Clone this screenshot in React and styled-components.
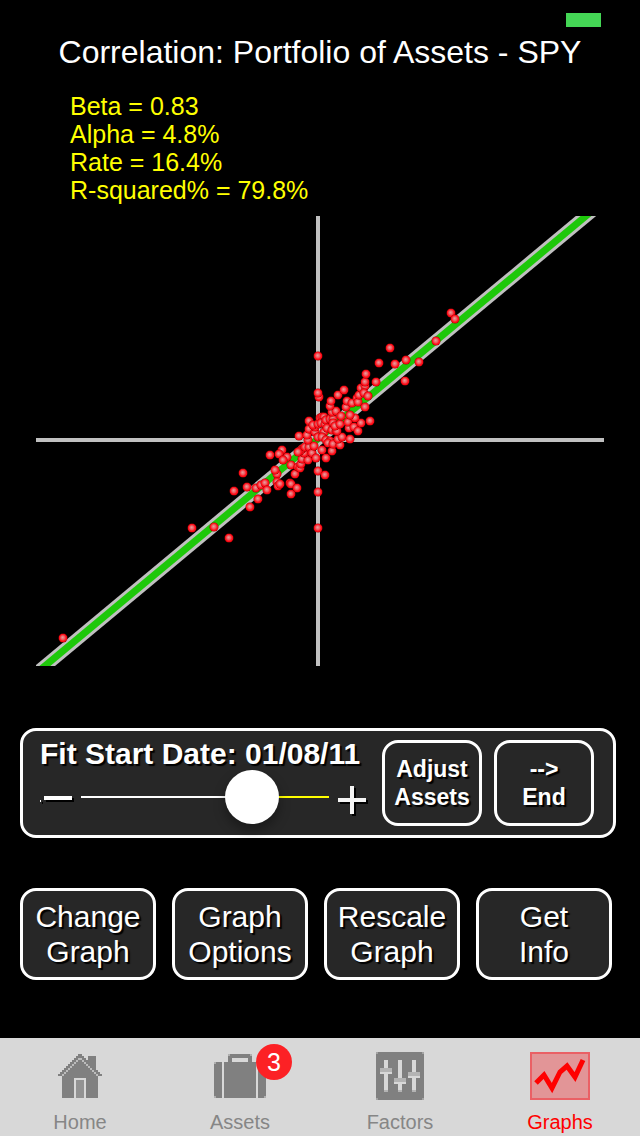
import React, { useState } from "react";
import styled, { createGlobalStyle } from "styled-components";

const GlobalStyle = createGlobalStyle`
  body {
    margin: 0;
    background: #000;
    font-family: "Liberation Sans", Arial, Helvetica, sans-serif;
  }

  * {
    box-sizing: border-box;
  }
`;

const Screen = styled.div`
  display: flex;
  flex-direction: column;
  min-height: 100vh;
  color: #fff;
`;

const StatusBar = styled.div`
  display: flex;
  justify-content: flex-end;
  height: 32px;
  padding: 13px 39px 0 0;
`;

const Battery = styled.div`
  width: 35px;
  height: 14px;
  background: #44d655;
`;

const Title = styled.h1`
  margin: 0;
  font-size: 32px;
  font-weight: normal;
  line-height: 40px;
  text-align: center;
`;

const Stats = styled.ul`
  list-style: none;
  margin: 20px 0 12px;
  padding: 0 70px;
  color: #ff0;
  font-size: 25px;
  line-height: 28px;
`;

const Chart = styled.svg`
  display: block;
  margin: 0 36px;
`;

const Panel = styled.section`
  display: flex;
  gap: 12px;
  margin: 62px 24px 50px 20px;
  padding: 9px 19px 9px 17px;
  background: #272727;
  border: 3px solid #fff;
  border-radius: 16px;
`;

const DateField = styled.div`
  flex: 1;
  min-width: 0;
`;

const DateLabel = styled.label`
  display: block;
  font-size: 30px;
  font-weight: bold;
  line-height: 28px;
  white-space: nowrap;
  text-shadow: 2px 2px 1px #000;
`;

const SliderRow = styled.div`
  display: flex;
  height: 58px;
`;

const StepButton = styled.button`
  width: 41px;
  padding: 0;
  background: none;
  border: 0;

  svg {
    display: block;
    overflow: visible;
    filter: drop-shadow(2px 2px 0 #000);
  }
`;

const Slider = styled.input`
  appearance: none;
  flex: 1;
  min-width: 0;
  height: 58px;
  margin: 0;
  background: none;

  &::-webkit-slider-runnable-track {
    height: 2px;
    background: linear-gradient(
      to right,
      #fff ${(props) => props.value}%,
      #ff0 ${(props) => props.value}%
    );
  }

  &::-webkit-slider-thumb {
    appearance: none;
    width: 54px;
    height: 54px;
    margin-top: -26px;
    background: #fff;
    border-radius: 50%;
    box-shadow: 0 6px 12px rgba(0, 0, 0, 0.35);
  }
`;

const Button = styled.button`
  padding: 0;
  color: #fff;
  background: #272727;
  border: 3px solid #fff;
  border-radius: 16px;
  font-family: inherit;
  font-size: 30px;
  line-height: 35px;
  text-shadow: 2px 2px 1px #000;
`;

const SmallButton = styled(Button)`
  width: 100px;
  font-size: 23px;
  font-weight: bold;
  line-height: 28px;
`;

const Actions = styled.div`
  display: grid;
  grid-template-columns: repeat(4, 1fr);
  gap: 16px;
  margin: 0 28px 58px 20px;

  ${Button} {
    height: 92px;
  }
`;

const TabBar = styled.nav`
  display: grid;
  grid-template-columns: repeat(4, 1fr);
  height: 98px;
  margin-top: auto;
  background: #d8d8d8;
`;

const Tab = styled.a`
  display: flex;
  flex-direction: column;
  align-items: center;
  padding-top: 14px;
  color: ${(props) => (props.$active ? "#f00" : "#868686")};
  font-size: 20px;
  line-height: 24px;
  text-decoration: none;
`;

const TabIcon = styled.span`
  position: relative;
  display: flex;
  align-items: center;
  justify-content: center;
  width: 60px;
  height: 48px;
  margin-bottom: 10px;
`;

const Badge = styled.span`
  position: absolute;
  top: -8px;
  right: -22px;
  width: 36px;
  color: #fff;
  background: #fc2125;
  border-radius: 50%;
  font-size: 25px;
  line-height: 36px;
  text-align: center;
`;

// monthly returns relative to the axes, y grows downwards
const returns = [
  [-255, 198], [-126, 88], [-104, 87], [-89, 98], [-84, 51], [-75, 33],
  [-71, 47], [-68, 67], [-60, 59], [-62, 48], [-57, 45], [-53, 43],
  [-51, 50], [-48, 15], [-36, 10], [-39, 14], [-31, 17], [-35, 20],
  [-41, 34], [-43, 30], [-41, 42], [-40, 46], [-38, 44], [-28, 43],
  [-27, 44], [-21, 48], [-27, 54], [-23, 34], [-27, 25], [-20, 27],
  [-18, 28], [-17, 24], [-16, 19], [-10, 20], [-14, 13], [-16, 9],
  [-18, 11], [-20, 12], [-13, 7], [-19, -4], [-9, 7], [-6, 13],
  [-2, 18], [4, 10], [8, 18], [0, 31], [7, 35], [0, 52], [0, 88],
  [-10, 0], [-11, -5], [-9, -11], [-3, -8], [0, -3], [-4, 6],
  [-9, -19], [-3, -13], [-5, -15], [0, -16], [2, -22], [4, -23],
  [6, -23], [3, -17], [7, -16], [8, -20], [6, -8], [9, -12], [4, -3],
  [8, 0], [12, 1], [10, 3], [14, 11], [15, 4], [22, 5], [20, -1],
  [24, -3], [32, -1], [14, -10], [18, -9], [19, -9], [12, -21],
  [15, -21], [15, -17], [17, -14], [22, -16], [14, -28], [18, -29],
  [12, -34], [13, -39], [23, -24], [31, -12], [30, -18], [36, -13],
  [40, -9], [43, -17], [52, -19], [37, -22], [32, -25], [28, -33],
  [29, -39], [34, -37], [39, -42], [40, -38], [47, -33], [41, -45],
  [43, -52], [47, -54], [46, -47], [50, -44], [47, -58], [48, -66],
  [58, -58], [20, -45], [26, -50], [1, -43], [0, -47], [0, -84],
  [61, -77], [72, -92], [77, -76], [88, -80], [101, -78], [87, -59],
  [118, -99], [133, -127], [137, -121],
];

const ScatterChart = () => (
  <Chart viewBox="-282 -224 568 450" role="img" aria-label="Correlation scatter plot">
    <defs>
      <radialGradient id="dot" fx="0.45" fy="0.42">
        <stop offset="0" stopColor="#e8a0a0" />
        <stop offset="0.45" stopColor="#f05a60" />
        <stop offset="0.7" stopColor="#ff1822" />
        <stop offset="0.88" stopColor="#f40410" />
        <stop offset="1" stopColor="#900" />
      </radialGradient>
    </defs>
    <path d="M0-224V226M-282 0H286" stroke="#c0c0c0" strokeWidth="4" />
    <path d="M-290 240L286-239" stroke="#c0c0c0" strokeWidth="13" />
    <path d="M-290 240L286-239" stroke="#1ec80a" strokeWidth="7" />
    {returns.map(([x, y], i) => (
      <circle key={i} cx={x} cy={y} r="4.5" fill="url(#dot)" />
    ))}
  </Chart>
);

const steps = [2, 3, 4, 5, 6, 7, 8, 9, 10];

const HomeIcon = () => (
  <svg width="44" height="44" viewBox="0 0 22 22" shapeRendering="crispEdges">
    <path d="M15 1h4v8h-4z" fill="#808080" />
    <path
      d="M10 0h2v1h1v1h1v1h1v1h1v1h1v1h1v1h1v1h1v1h1v1h1v1h-2v11H2V11H0v-1h1V9h1V8h1V7h1V6h1V5h1V4h1V3h1V2h1V1h1z"
      fill="#808080"
    />
    {steps.map((r) => (
      <path key={r} d={`M${12 - r} ${r}h1v1h-1zM${9 + r} ${r}h1v1h-1z`} fill="#bcbcbc" />
    ))}
    <path d="M8 12h6v10H8z" fill="#d8d8d8" />
    <path d="M9 13h4v9H9z" fill="#929292" />
  </svg>
);

const AssetsIcon = () => (
  <svg width="52" height="44" viewBox="0 0 26 22" shapeRendering="crispEdges">
    <path
      d="M8 0h10v1h1v3h-2V2H9v2H7V1h1zM5 4h16v18H5zM1 4h3v18H1v-1H0V5h1zM22 4h3v1h1v16h-1v1h-3z"
      fill="#808080"
    />
    <path d="M7 0h1v1H7zM18 0h1v1h-1zM0 4h1v1H0zM25 4h1v1h-1zM0 21h1v1H0zM25 21h1v1h-1z" fill="#b0b0b0" />
  </svg>
);

const FactorsIcon = () => (
  <svg width="48" height="48" viewBox="0 0 24 24" shapeRendering="crispEdges">
    <path d="M0 0h24v24H0z" fill="#a4a4a4" />
    <path d="M1 0h22v1h1v22h-1v1H1v-1H0V1h1z" fill="#808080" />
    <path d="M4 4h2v15H4zM11 4h2v15h-2zM18 4h2v15h-2zM2 10h6v1H2zM9 15h6v1H9zM16 12h6v1h-6z" fill="#d8d8d8" />
    <path d="M2 8h6v2H2zM9 13h6v2H9zM16 10h6v2h-6zM4 19h2v1H4zM11 19h2v1h-2zM18 19h2v1h-2z" fill="#b4b4b4" />
  </svg>
);

const GraphsIcon = () => (
  <svg width="60" height="48" viewBox="0 0 60 48">
    <path d="M1 1h58v46H1z" fill="#e29597" stroke="#ea6065" strokeWidth="2" />
    <path d="M6 31L14 23L22 36L30 20L37 14L45 25L53 8" fill="none" stroke="#f00" strokeWidth="5" />
  </svg>
);

const tabs = [
  { name: "Home", Icon: HomeIcon },
  { name: "Assets", Icon: AssetsIcon, badge: 3 },
  { name: "Factors", Icon: FactorsIcon },
  { name: "Graphs", Icon: GraphsIcon, active: true },
];

const App = () => {
  const [position, setPosition] = useState(74);

  return (
    <Screen>
      <GlobalStyle />
      <StatusBar>
        <Battery />
      </StatusBar>
      <Title>Correlation: Portfolio of Assets - SPY</Title>
      <Stats>
        <li>Beta = 0.83</li>
        <li>Alpha = 4.8%</li>
        <li>Rate = 16.4%</li>
        <li>R-squared% = 79.8%</li>
      </Stats>
      <ScatterChart />
      <Panel>
        <DateField>
          <DateLabel htmlFor="start-date">Fit Start Date: 01/08/11</DateLabel>
          <SliderRow>
            <StepButton aria-label="Earlier" onClick={() => setPosition(Math.max(0, position - 1))}>
              <svg width="41" height="58" viewBox="0 0 41 58">
                <path d="M4 28h28v4H4zM0 32h1v2H0z" fill="#fff" />
              </svg>
            </StepButton>
            <Slider
              id="start-date"
              type="range"
              min="0"
              max="100"
              value={position}
              onChange={(e) => setPosition(Number(e.target.value))}
            />
            <StepButton aria-label="Later" onClick={() => setPosition(Math.min(100, position + 1))}>
              <svg width="41" height="58" viewBox="0 0 41 58">
                <path d="M9 32h28M23 18v28" stroke="#f4f4f4" strokeWidth="4" />
              </svg>
            </StepButton>
          </SliderRow>
        </DateField>
        <SmallButton>
          Adjust
          <br />
          Assets
        </SmallButton>
        <SmallButton>
          --&gt;
          <br />
          End
        </SmallButton>
      </Panel>
      <Actions>
        <Button>
          Change
          <br />
          Graph
        </Button>
        <Button>
          Graph
          <br />
          Options
        </Button>
        <Button>
          Rescale
          <br />
          Graph
        </Button>
        <Button>
          Get
          <br />
          Info
        </Button>
      </Actions>
      <TabBar>
        {tabs.map(({ name, Icon, badge, active }) => (
          <Tab key={name} href={`#${name.toLowerCase()}`} $active={active}>
            <TabIcon>
              <Icon />
              {badge && <Badge>{badge}</Badge>}
            </TabIcon>
            {name}
          </Tab>
        ))}
      </TabBar>
    </Screen>
  );
};

export default App;
